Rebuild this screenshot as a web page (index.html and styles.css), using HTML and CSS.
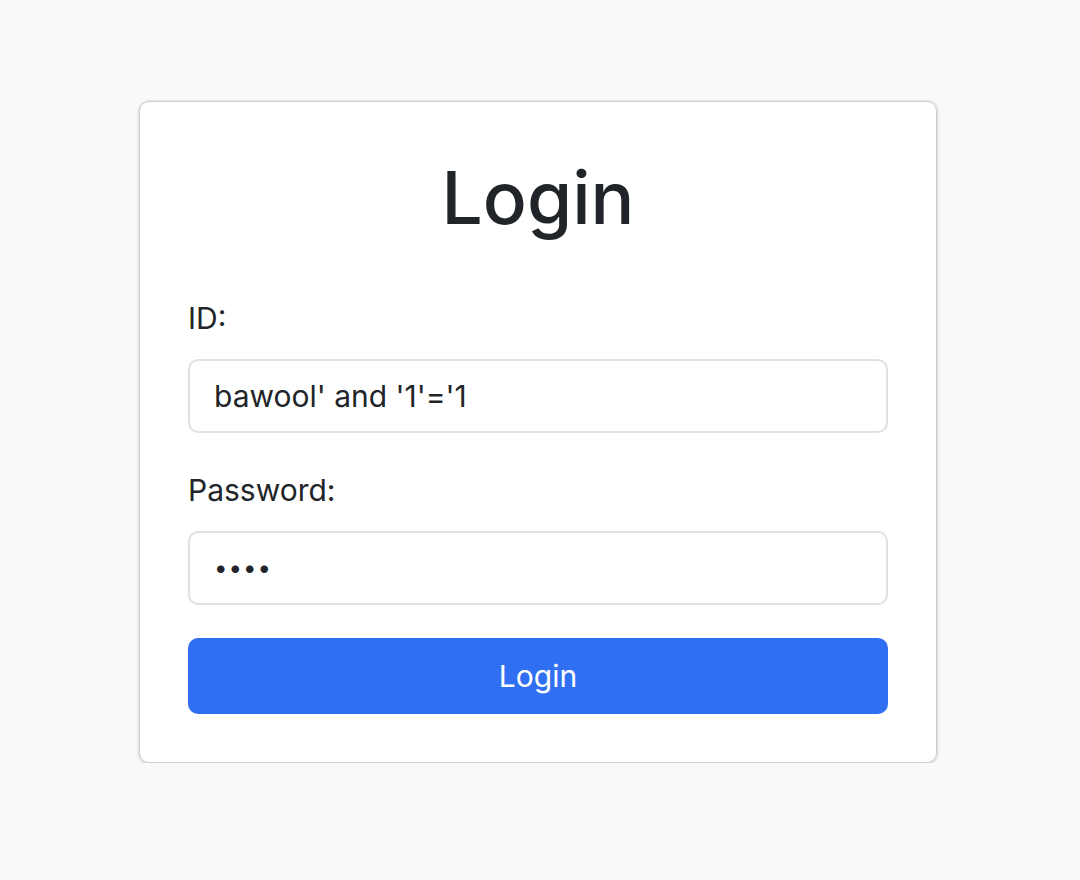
FILE: index.html
```html
<!DOCTYPE html>
<html lang="en">
<head>
<meta charset="utf-8">
<title>Login</title>
<link rel="stylesheet" href="styles.css">
</head>
<body>
<main class="page">
  <form class="card">
    <h1 class="title">Login</h1>
    <label class="label" for="id">ID:</label>
    <input class="field" id="id" type="text" value="bawool' and '1'='1">
    <label class="label label-pw" for="pw">Password:</label>
    <input class="field field-pw" id="pw" type="password" value="1234">
    <button class="btn" type="button">Login</button>
  </form>
</main>
</body>
</html>
```
FILE: styles.css
```css
* { box-sizing: border-box; }
html, body {
  margin: 0;
  padding: 0;
  background: #f8f9fa;
  font-family: Inter, "Noto Sans", sans-serif;
  color: #212529;
}
.page {
  display: flex;
  justify-content: center;
  padding: 101px 4px 0 0;
}
.card {
  width: 798px;
  background: #fff;
  border: 1px solid #cfcfcf;
  border-radius: 10px;
  box-shadow: 0 0 0 1px rgba(0,0,0,0.04), 0 1px 4px rgba(0,0,0,0.14);
  padding: 52px 48px 48px;
  display: flex;
  flex-direction: column;
}
.title {
  margin: 0 0 54px;
  text-align: center;
  font-size: 73px;
  font-weight: 500;
  line-height: 1.2;
}
.label {
  font-size: 30px;
  line-height: 1.5;
  margin-bottom: 18px;
}
.label-pw { margin-top: 35px; }
.field {
  height: 74px;
  border: 2px solid #dee2e6;
  border-radius: 10px;
  padding: 0 24px;
  font-family: inherit;
  font-size: 30px;
  color: #212529;
  background: #fff;
}
.field-pw {
  font-size: 24px;
  letter-spacing: 1px;
}
.btn {
  margin-top: 33px;
  height: 76px;
  border: none;
  border-radius: 10px;
  background: #316ff2;
  color: #fff;
  font-family: inherit;
  font-size: 30px;
}
```
